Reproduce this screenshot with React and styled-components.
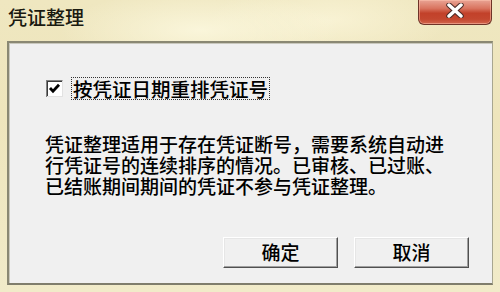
import React from "react";
import styled, { createGlobalStyle } from "styled-components";

const GlobalStyle = createGlobalStyle`
  html, body {
    margin: 0;
    padding: 0;
    width: 500px;
    height: 292px;
    overflow: hidden;
  }
  body {
    font-family: "Noto Sans CJK SC", "Noto Sans", sans-serif;
    color: #000;
  }
`;

const Frame = styled.div`
  width: 500px;
  height: 292px;
  box-sizing: border-box;
  display: flex;
  flex-direction: column;
  padding: 0 7px 7px 7px;
  background:
    radial-gradient(ellipse 140px 40px at 200px 30px, rgba(255, 252, 230, 0.7), transparent),
    radial-gradient(ellipse 120px 40px at 330px 20px, rgba(255, 250, 225, 0.6), transparent),
    linear-gradient(180deg, #efe7c0 0%, #eee5bc 40%, #f1ebc9 100%);
`;

const TitleBar = styled.div`
  height: 41px;
  display: flex;
  align-items: flex-start;
  justify-content: space-between;
  flex-shrink: 0;
`;

const Title = styled.div`
  font-size: 19px;
  line-height: 19px;
  font-weight: 500;
  margin-top: 7px;
  margin-left: 1px;
  color: #1a1a10;
`;

const CloseButton = styled.div`
  width: 74px;
  height: 25px;
  margin-right: 1px;
  box-sizing: border-box;
  border: 1px solid #6e3328;
  border-top: none;
  border-radius: 0 0 6px 6px;
  background: linear-gradient(180deg, #e9a494 0%, #d9745f 35%, #c2412a 55%, #c4472f 80%, #d2664e 100%);
  box-shadow: inset 0 0 0 1px rgba(255, 200, 180, 0.5);
  display: flex;
  align-items: center;
  justify-content: center;
  padding-bottom: 4px;
`;

const Client = styled.div`
  flex: 1;
  background: #f0f0f0;
  border-top: 2px solid #8a8873;
  border-left: 2px solid #8a8873;
  border-right: 1px solid #a8a690;
  border-bottom: 2px solid #7f7d6c;
  box-shadow: inset 1px 1px 0 #c9c8bd;
  display: flex;
  flex-direction: column;
  padding: 33px 23px 15px 37px;
`;

const CheckRow = styled.label`
  display: flex;
  align-items: center;
  gap: 8px;
  height: 24px;
`;

const Box = styled.span`
  width: 17px;
  height: 17px;
  flex-shrink: 0;
  display: inline-flex;
`;

const Label = styled.span`
  font-size: 19.5px;
  line-height: 21px;
  font-weight: 500;
  padding: 0 1px;
  border: 1px dotted #333;
`;

const Paragraph = styled.div`
  margin-top: 33px;
  margin-left: -1px;
  font-size: 19px;
  font-weight: 500;
  white-space: nowrap;
`;

const Line = styled.div`
  height: 21px;
  line-height: 21px;
  overflow: visible;
`;

const Buttons = styled.div`
  margin-top: auto;
  display: flex;
  justify-content: flex-end;
  gap: 16px;
`;

const Button = styled.button`
  width: 115px;
  height: 31px;
  font-family: inherit;
  font-size: 19px;
  line-height: 19px;
  font-weight: 500;
  color: #000;
  background: #f0f0f0;
  border: none;
  border-top: 1px solid #fff;
  border-left: 1px solid #fff;
  border-right: 1px solid #505050;
  border-bottom: 1px solid #505050;
  box-shadow: inset -1px -1px 0 #a0a0a0, inset 1px 1px 0 #e6e6e6;
  padding: 0 0 2px 0;
`;

const CheckIcon = () => (
  <svg width="17" height="17" viewBox="0 0 17 17">
    <rect x="0" y="0" width="17" height="17" fill="#fff" />
    <path d="M0 0H17V1H1V17H0Z" fill="#808080" />
    <path d="M1 1H16V2H2V16H1Z" fill="#3a3a3a" />
    <path d="M16 1V16H1V17H17V0Z" fill="#e2e2e2" />
    <path d="M4 8L7 11.2L13 4.8" stroke="#000" strokeWidth="2.8" fill="none" />
  </svg>
);

const CloseIcon = () => (
  <svg width="20" height="15" viewBox="0 0 20 15">
    <path
      d="M4 2L10 7.5L16 2M4 13L10 7.5L16 13"
      stroke="#4a2a25"
      strokeWidth="5.5"
      strokeLinecap="round"
      fill="none"
    />
    <path
      d="M4 2L10 7.5L16 2M4 13L10 7.5L16 13"
      stroke="#fff"
      strokeWidth="3.5"
      strokeLinecap="round"
      fill="none"
    />
  </svg>
);

const App = () => (
  <>
    <GlobalStyle />
    <Frame>
      <TitleBar>
        <Title>凭证整理</Title>
        <CloseButton>
          <CloseIcon />
        </CloseButton>
      </TitleBar>
      <Client>
        <CheckRow>
          <Box>
            <CheckIcon />
          </Box>
          <Label>按凭证日期重排凭证号</Label>
        </CheckRow>
        <Paragraph>
          <Line>凭证整理适用于存在凭证断号，需要系统自动进</Line>
          <Line>行凭证号的连续排序的情况。已审核、已过账、</Line>
          <Line>已结账期间期间的凭证不参与凭证整理。</Line>
        </Paragraph>
        <Buttons>
          <Button>确定</Button>
          <Button>取消</Button>
        </Buttons>
      </Client>
    </Frame>
  </>
);

export default App;
